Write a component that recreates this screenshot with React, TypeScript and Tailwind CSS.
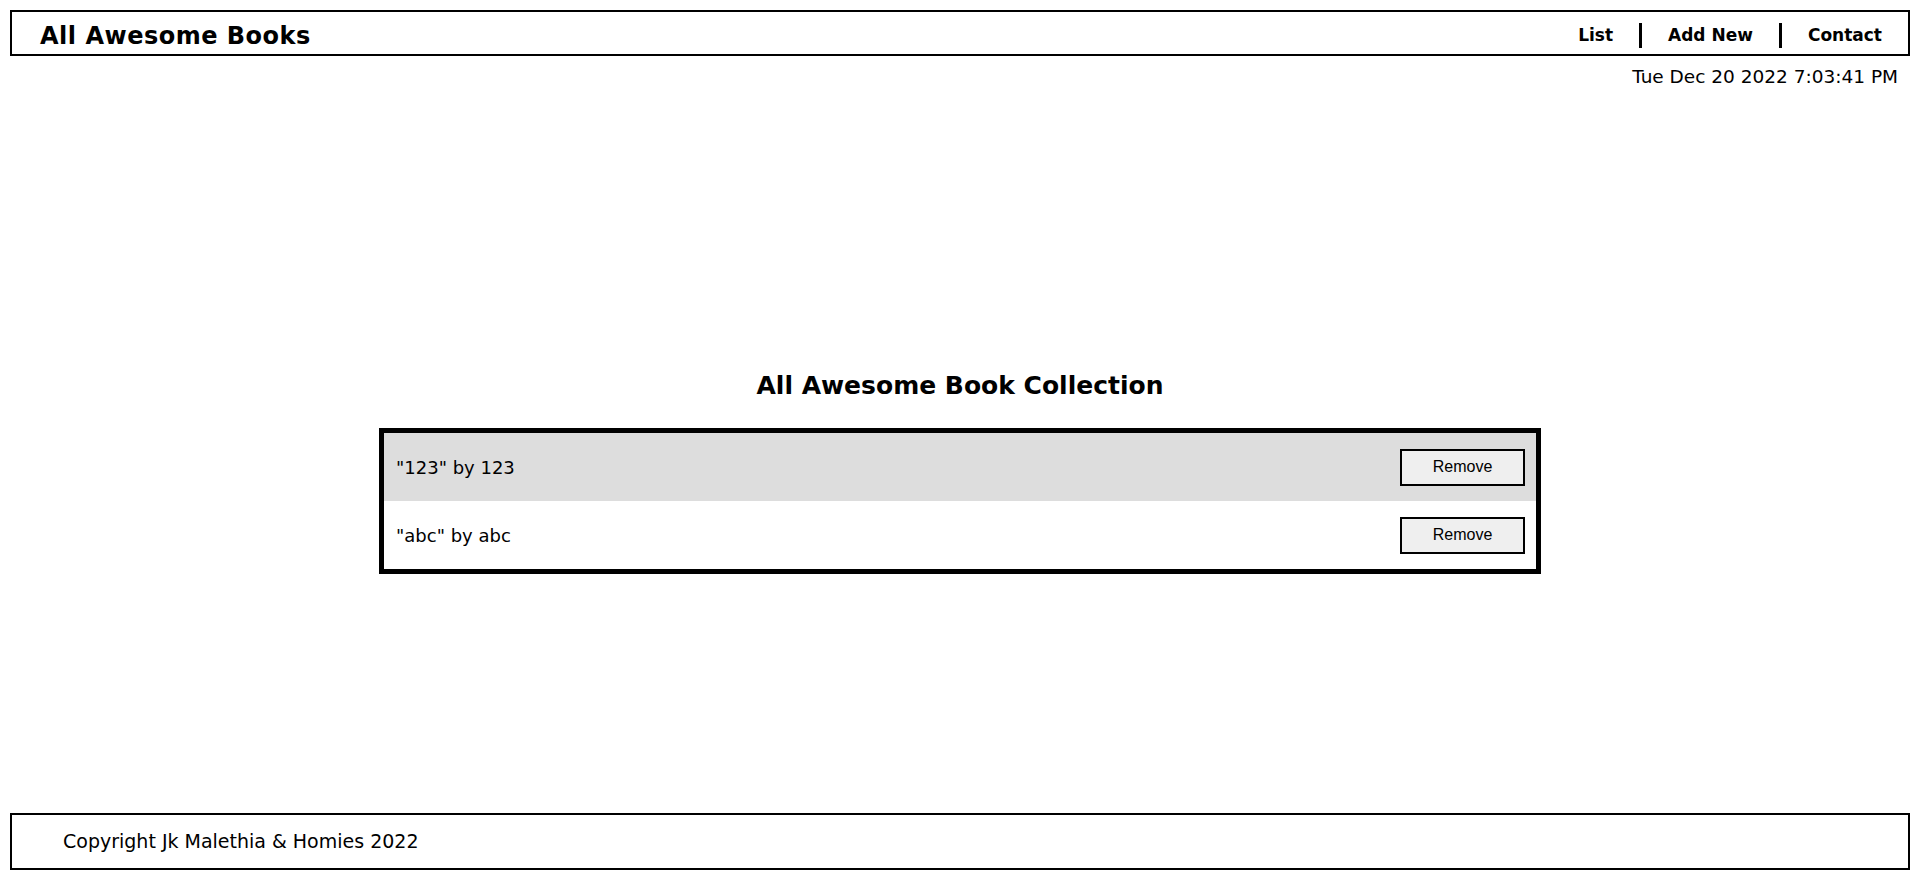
import React from 'react';

const books = [
  { title: '123', author: '123' },
  { title: 'abc', author: 'abc' },
];

const comic = "font-['Comic_Sans_MS','DejaVu_Sans',sans-serif]";

export default function App() {
  return (
    <div className={`flex h-screen flex-col bg-white text-black ${comic}`}>
      <header className="mx-[10px] mt-[10px] flex h-[46px] items-center justify-between border-2 border-black pl-[28px] pr-[26px] pt-[5px]">
        <h1 className="text-[24px] font-bold tracking-[0.5px]">All Awesome Books</h1>
        <nav className="flex items-center text-[17px] font-bold">
          <a className="cursor-pointer">List</a>
          <span className="mx-[26px] h-[25px] w-[3px] bg-black" />
          <a className="cursor-pointer">Add New</a>
          <span className="mx-[26px] h-[25px] w-[3px] bg-black" />
          <a className="cursor-pointer">Contact</a>
        </nav>
      </header>
      <p className="mt-[7px] pr-[22px] text-right text-[18.5px]">Tue Dec 20 2022 7:03:41 PM</p>

      <main className="flex flex-1 flex-col items-center justify-center pt-[37px]">
        <h2 className="mb-[24px] text-[25px] font-bold">All Awesome Book Collection</h2>
        <ul className="w-[1162px] border-[5px] border-black">
          {books.map((b, i) => (
            <li
              key={b.title}
              className={`flex h-[68px] items-center justify-between pl-[12px] pr-[11px] ${i % 2 === 0 ? 'bg-[#dddddd]' : 'bg-white'}`}
            >
              <span className="text-[18px]">"{b.title}" by {b.author}</span>
              <button className="h-[37px] w-[125px] border-2 border-black bg-[#efefef] font-['Liberation_Sans',Arial,sans-serif] text-[16px]">
                Remove
              </button>
            </li>
          ))}
        </ul>
      </main>

      <footer className="mx-[10px] mb-[21px] flex h-[57px] items-center border-2 border-black pl-[51px]">
        <p className="text-[19px]">Copyright Jk Malethia &amp; Homies 2022</p>
      </footer>
    </div>
  );
}
